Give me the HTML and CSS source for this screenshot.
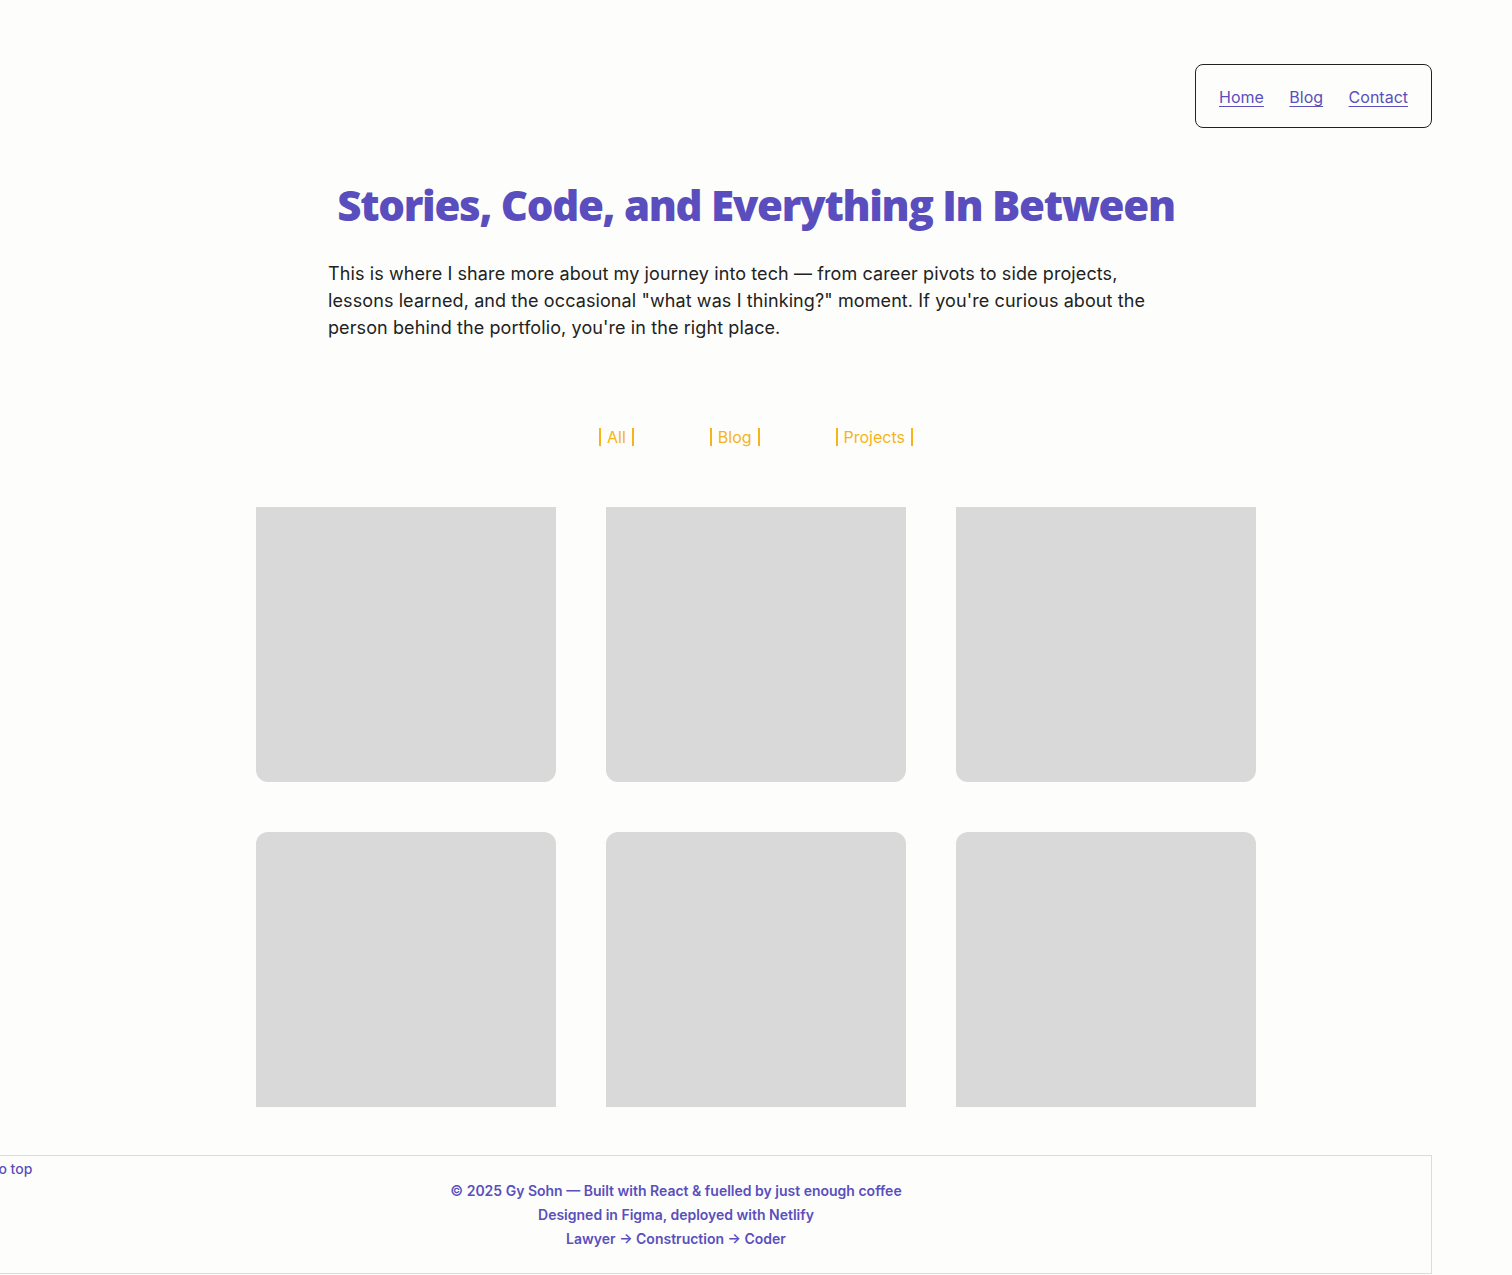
FILE: index.html
```html
<!DOCTYPE html>
<html lang="en">
<head>
<meta charset="utf-8">
<title>Blog</title>
<link rel="stylesheet" href="styles.css">
</head>
<body>
<header class="site-header">
  <nav class="nav-box">
    <a href="#" class="nav-link">Home</a>
    <a href="#" class="nav-link">Blog</a>
    <a href="#" class="nav-link">Contact</a>
  </nav>
</header>
<main class="main">
  <h1 class="title">Stories, Code, and Everything In Between</h1>
  <p class="intro">This is where I share more about my journey into tech — from career pivots to side projects, lessons learned, and the occasional "what was I thinking?" moment. If you're curious about the person behind the portfolio, you're in the right place.</p>
  <div class="filters">
    <button class="filter">All</button>
    <button class="filter">Blog</button>
    <button class="filter">Projects</button>
  </div>
  <section class="grid">
    <div class="card card-top"></div>
    <div class="card card-top"></div>
    <div class="card card-top"></div>
    <div class="card card-bottom"></div>
    <div class="card card-bottom"></div>
    <div class="card card-bottom"></div>
  </section>
</main>
<footer class="footer">
  <a href="#" class="back-top">Back to top</a>
  <div class="footer-lines">
    <p>© 2025 Gy Sohn — Built with React &amp; fuelled by just enough coffee</p>
    <p>Designed in Figma, deployed with Netlify</p>
    <p>Lawyer → Construction → Coder</p>
  </div>
</footer>
</body>
</html>
```
FILE: styles.css
```css
* { box-sizing: border-box; }
html, body { margin: 0; padding: 0; }
body {
  background: #fdfefb;
  font-family: Inter, "Noto Sans", sans-serif;
  color: #222;
  overflow-x: hidden;
}
.site-header {
  display: flex;
  justify-content: flex-end;
  padding: 64px 80px 0 0;
}
.nav-box {
  display: flex;
  gap: 25.5px;
  border: 1px solid #222;
  border-radius: 8px;
  padding: 22px 23px 19px;
  line-height: 21px;
}
.nav-link {
  font-size: 16px;
  color: #5a4fbd;
  text-decoration: underline;
  text-underline-offset: 3px;
  text-decoration-thickness: 1px;
}
.main {
  display: flex;
  flex-direction: column;
  align-items: center;
}
.title {
  margin: 52px 0 0;
  font-family: "Open Sans", sans-serif;
  font-weight: 800;
  font-size: 42px;
  line-height: 1.2;
  color: #5a4dbd;
  letter-spacing: -1.3px;
  text-align: center;
}
.intro {
  width: 830px;
  margin: 30px 26px 0 0;
  font-size: 18px;
  letter-spacing: 0.1px;
  line-height: 27px;
  color: #222;
}
.filters {
  display: flex;
  gap: 76px;
  margin-top: 87px;
}
.filter {
  font-family: Inter, sans-serif;
  font-size: 16px;
  line-height: 18px;
  color: #f7b318;
  background: none;
  border: none;
  border-left: 2px solid #f7b318;
  border-right: 2px solid #f7b318;
  padding: 0 6px;
  margin: 0;
}
.grid {
  display: grid;
  grid-template-columns: repeat(3, 300px);
  gap: 50px;
  margin-top: 61px;
}
.card {
  height: 275px;
  background: #d9d9d9;
}
.card-top { border-radius: 0 0 12px 12px; }
.card-bottom { border-radius: 12px 12px 0 0; }
.footer {
  margin: 48px 0 0 -80px;
  width: 1512px;
  border: 1px solid #dcdcdc;
  padding: 3px 0 22px 36px;
  color: #5a4fbd;
}
.back-top {
  display: block;
  font-size: 14px;
  line-height: 19px;
  color: #5a4fbd;
  text-decoration: none;
  font-weight: 500;
}
.footer-lines {
  margin: 1px 0 0 -36px;
  text-align: center;
  font-size: 14px;
  font-weight: 600;
  line-height: 24px;
}
.footer-lines p { margin: 0; }
```
